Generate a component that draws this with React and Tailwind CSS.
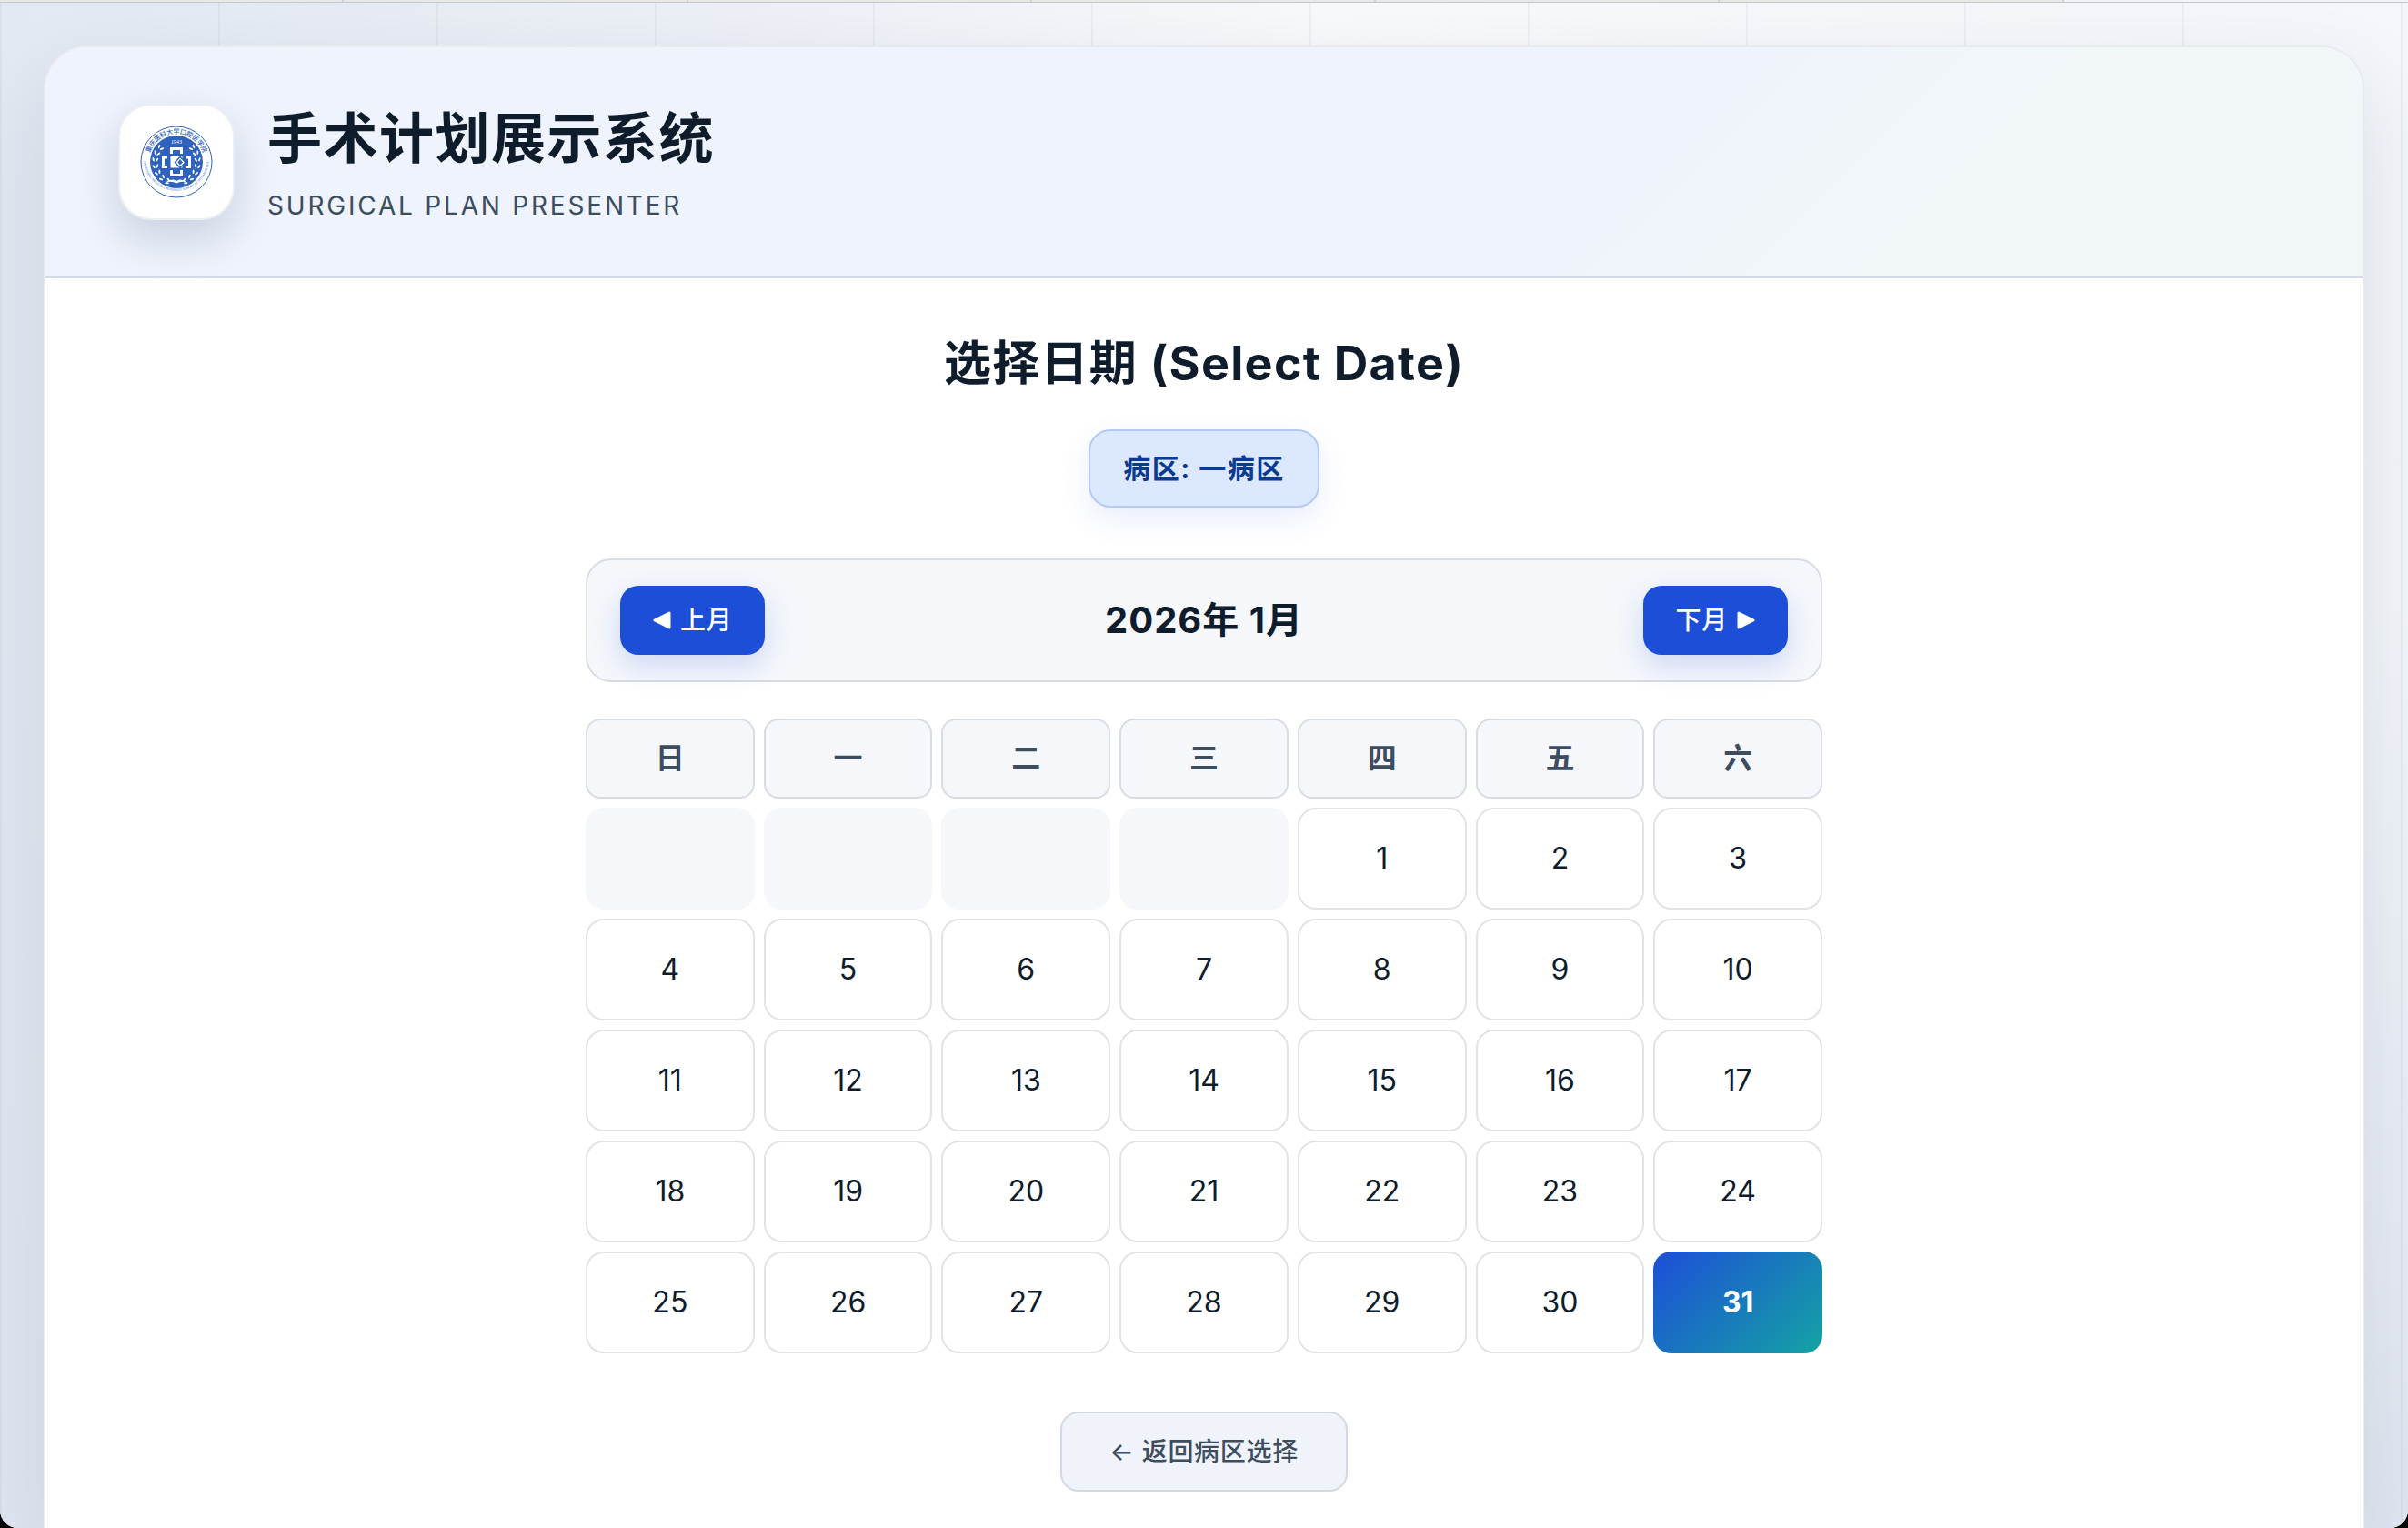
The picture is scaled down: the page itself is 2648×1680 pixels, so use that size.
import React from "react";

const WEEKDAYS = ["日", "一", "二", "三", "四", "五", "六"];
const LEADING_BLANKS = 4;
const DAYS_IN_MONTH = 31;
const SELECTED_DAY = 31;

const tabs = [1, 2, 3, 4, 5, 6];

// Thin strip of the browser tab bar above the page
const TabStrip = () => (
  <div className="flex h-[3px] border-b border-[#c4c8ce] bg-[#f2f4f5]">
    {tabs.map((tab) => (
      <div key={tab} className="w-1/7 border-r-2 border-[#cfd1d3] bg-[#e8e8e7]"></div>
    ))}
  </div>
);

const Leaf = ({ x, y, angle }) => (
  <ellipse cx={x} cy={y} rx="2" ry="4.6" transform={`rotate(${angle} ${x} ${y})`} />
);

const Emblem = () => (
  <svg viewBox="0 0 160 160" className="size-20 overflow-visible" role="img" aria-label="重庆医科大学口腔医学院">
    <defs>
      <path id="arc-top" d="M 18 80 A 62 62 0 0 1 142 80" />
      <path id="arc-bottom" d="M 8 72 A 72 72 0 1 0 152 72" />
    </defs>
    <circle cx="80" cy="80" r="78" fill="#fff" stroke="#2f62bd" strokeWidth="2" />
    <circle cx="80" cy="80" r="58" fill="#2f62bd" />
    <text fill="#2f62bd" fontSize="14" fontWeight="500" textAnchor="middle" fontFamily="'Noto Sans CJK SC', sans-serif">
      <textPath href="#arc-top" startOffset="50%">重庆医科大学口腔医学院</textPath>
    </text>
    <text fill="#2f62bd" fontSize="7" textAnchor="middle" fontFamily="'Liberation Serif', serif">
      <textPath href="#arc-bottom" startOffset="50%">CHONGQING MEDICAL UNIVERSITY SCHOOL OF STOMATOLOGY</textPath>
    </text>
    <text x="80" y="39" fill="#fff" fontSize="12" textAnchor="middle" fontFamily="'Liberation Serif', serif">1943</text>
    {/* Cross made of four brackets */}
    <g fill="none" stroke="#fff" strokeWidth="6">
      <path d="M69 62 V51 H91 V62" />
      <path d="M69 98 V109 H91 V98" />
      <path d="M60 70 H51 V91 H60" />
      <path d="M100 70 H109 V91 H100" />
    </g>
    <rect x="67" y="68" width="26" height="25" fill="#fff" />
    <path d="M88 69 L100 81 L88 93 L77 81 Z" fill="#fff" stroke="#2f62bd" strokeWidth="3" />
    <path d="M88 74 L94 81 L88 87 L83 81 Z" fill="#2f62bd" />
    {/* Laurel branches */}
    <g fill="#fff">
      {[-1, 1].map((side) =>
        [0, 1, 2, 3, 4, 5, 6].map((i) => {
          const t = ((i * 18 - 42) * Math.PI) / 180;
          return (
            <g key={`${side}-${i}`}>
              <Leaf x={80 + side * 51 * Math.cos(t)} y={80 + 51 * Math.sin(t)} angle={side * (i * 18 - 20)} />
              <Leaf x={80 + side * 43 * Math.cos(t)} y={80 + 43 * Math.sin(t)} angle={side * (i * 18 - 70)} />
            </g>
          );
        })
      )}
      <path d="M56 125 Q70 115 80 122 Q90 115 104 125 Q90 121 80 127 Q70 121 56 125 Z" />
    </g>
  </svg>
);

const Triangle = ({ className }) => (
  <svg viewBox="0 0 20 20" className={className} aria-hidden="true">
    <path d="M2 10 L18 2 V18 Z" fill="currentColor" stroke="currentColor" strokeWidth="3" strokeLinejoin="round" />
  </svg>
);

const NavButton = ({ children }) => (
  <button
    type="button"
    className="flex h-19 items-center gap-2.5 rounded-[20px] bg-[#1d4ed8] px-9 text-[28px] font-medium tracking-wide text-white shadow-[0_12px_32px_rgba(29,78,216,0.18)]"
  >
    {children}
  </button>
);

const Header = () => (
  <header className="flex h-[254px] items-center gap-9 border-b-2 border-[#d3d9e5] bg-linear-[135deg,#eef3fd_0%,#eff3fc_66%,#f1f7f9_80%,#f1f7f9_100%] px-20">
    <div className="flex size-32 items-center justify-center rounded-[36px] border-2 border-[#ebeef2] bg-white shadow-[0_20px_48px_rgba(15,30,60,0.16)]">
      <Emblem />
    </div>
    <div className="flex flex-col gap-4">
      <h1 className="text-[60px] leading-20 font-bold tracking-wide text-[#0f1c2c]">手术计划展示系统</h1>
      <p className="text-[28px] leading-9 tracking-widest text-[#3d4d60]">SURGICAL PLAN PRESENTER</p>
    </div>
  </header>
);

const DayCell = ({ day }) => {
  if (day === SELECTED_DAY) {
    return (
      <button
        type="button"
        aria-pressed="true"
        className="h-28 rounded-[20px] bg-linear-[135deg,#1d4ed8_0%,#14a3a3_100%] text-[32px] font-bold text-white"
      >
        {day}
      </button>
    );
  }
  return (
    <button type="button" className="h-28 rounded-[20px] border-2 border-[#e2e3e6] bg-white text-[32px] text-[#0f1c2c]">
      {day}
    </button>
  );
};

const Calendar = () => (
  <section className="w-full max-w-[1360px]">
    <div className="flex items-center justify-between rounded-[28px] border-2 border-[#d8dce3] bg-[#f5f7fb] px-9 py-7">
      <NavButton>
        <Triangle className="size-5" />
        上月
      </NavButton>
      <h3 className="text-[40px] leading-12 font-bold tracking-wide text-[#0f1c2c]">2026年 1月</h3>
      <NavButton>
        下月
        <Triangle className="size-5 rotate-180" />
      </NavButton>
    </div>

    <div className="mt-10 grid grid-cols-7 gap-2.5">
      {WEEKDAYS.map((name) => (
        <div
          key={name}
          className="flex h-22 items-center justify-center rounded-2xl border-2 border-[#d8dce3] bg-[#f5f7fb] text-[32px] font-bold text-[#3d4d60]"
        >
          {name}
        </div>
      ))}
      {Array.from({ length: LEADING_BLANKS }, (_, i) => (
        <div key={`blank-${i}`} className="h-28 rounded-[20px] bg-[#f5f7fb]"></div>
      ))}
      {Array.from({ length: DAYS_IN_MONTH }, (_, i) => (
        <DayCell key={i + 1} day={i + 1} />
      ))}
    </div>
  </section>
);

const App = () => {
  return (
    <div className="bg-black">
      <div className="flex min-h-screen flex-col overflow-hidden rounded-b-[20px] bg-[#eef2f7] font-['Inter','Noto_Sans_CJK_SC',sans-serif]">
        <TabStrip />
        <div className="flex flex-1 flex-col bg-[repeating-linear-gradient(90deg,rgba(100,116,139,0.07)_0px,rgba(100,116,139,0.07)_2px,transparent_2px,transparent_240px),linear-gradient(180deg,transparent_0%,transparent_40%,#e1e7f1_100%),linear-gradient(90deg,#e2e9f2_0%,#eceff6_30%,#f7f9fb_55%,#f3f6fa_100%)] px-12 pt-[47px]">
          <div className="flex flex-1 flex-col overflow-hidden rounded-t-[48px] border-2 border-b-0 border-[#e9eaec] bg-white shadow-[0_40px_100px_rgba(15,30,60,0.11)]">
            <Header />
            <main className="flex flex-col items-center px-20 pt-[62px]">
              <h2 className="text-[52px] leading-16 font-bold tracking-wide text-[#0f1c2c]">选择日期 (Select Date)</h2>
              <div className="mt-10 flex h-[86px] items-center rounded-3xl border-2 border-[#b5c9f6] bg-[#dbe8fe] px-9 text-[30px] font-bold tracking-wider text-[#0b3a91] shadow-[0_12px_32px_rgba(29,78,216,0.1)]">
                病区: 一病区
              </div>
              <div className="mt-14 flex w-full justify-center">
                <Calendar />
              </div>
              <button
                type="button"
                className="mt-16 h-22 rounded-[20px] border-2 border-[#d3d9e3] bg-[#f0f3f9] px-13 text-[28px] font-medium tracking-wide text-[#3d4d60]"
              >
                ← 返回病区选择
              </button>
            </main>
          </div>
        </div>
      </div>
    </div>
  );
};

export default App;
